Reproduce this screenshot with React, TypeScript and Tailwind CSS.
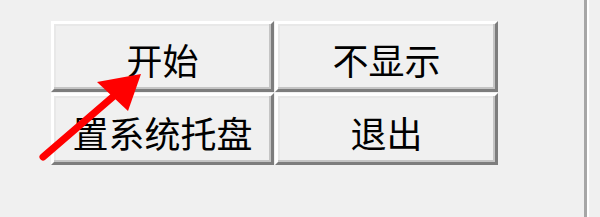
import React from 'react'

const btn =
  'flex items-center justify-center pt-[5px] border-solid border-[3px] border-t-white border-l-white border-r-[#7d7d7d] border-b-[#7d7d7d] shadow-[inset_-2px_-2px_0_#c4c4c4,inset_2px_2px_0_#e8e8e8] bg-[#f0f0f0] text-black text-[36px] leading-none'

const Arrow = () => (
  <svg className="absolute left-0 top-0 pointer-events-none" width="600" height="217" viewBox="0 0 600 217">
    <line x1="43" y1="157" x2="115" y2="95" stroke="#ff0000" strokeWidth="7" strokeLinecap="round" />
    <polygon points="141,74 97,82 128,111" fill="#ff0000" />
  </svg>
)

export default function App() {
  const labels = ['开始', '不显示', '置系统托盘', '退出']
  return (
    <div
      className="relative flex w-[600px] h-[217px] bg-[#f0f0f0] overflow-hidden"
      style={{ fontFamily: '"Noto Sans CJK SC", "Noto Sans", sans-serif' }}
    >
      <div className="w-[584px] pl-[51px] pt-[21px]">
        <div className="grid grid-cols-[223px_223px] grid-rows-[71px_72px] gap-[1px]">
          {labels.map((l) => (
            <div key={l} className={btn}>
              {l}
            </div>
          ))}
        </div>
      </div>
      <div className="w-[3px] h-full bg-[#a6a6a6]" />
      <div className="w-[2px] h-full bg-white" />
      <Arrow />
    </div>
  )
}
